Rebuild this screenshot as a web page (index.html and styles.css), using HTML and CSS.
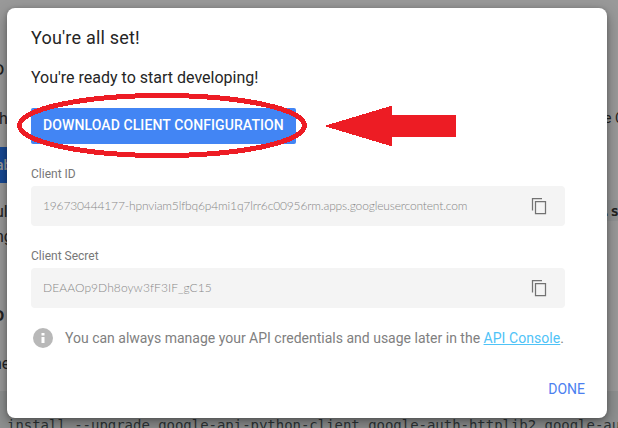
FILE: index.html
```html
<!DOCTYPE html>
<html lang="en">
<head>
<meta charset="utf-8">
<title>Client configuration</title>
<link rel="stylesheet" href="styles.css">
</head>
<body>
<main class="page">
  <div class="line heading">o</div>
  <div class="line intro"><span>h</span><span class="tail">e C</span></div>
  <div class="line enable"><span class="blue">ab</span></div>
  <div class="line result"><span>ul</span><code class="chip">.s</code></div>
  <div class="line next">ng</div>
  <div class="line heading second">o</div>
  <div class="line run">ne</div>
  <pre class="code">install --upgrade google-api-python-client google-auth-httplib2 google-au</pre>
</main>
<section class="dialog" role="dialog">
  <h1>You're all set!</h1>
  <p class="ready"><span>You're ready to start developing!</span></p>
  <button class="download"><span>DOWNLOAD CLIENT CONFIGURATION</span></button>
  <div class="label id-label">Client ID</div>
  <div class="field"><span class="value">196730444177-hpnviam5lfbq6p4mi1q7lrr6c00956rm.apps.googleusercontent.com</span>
    <svg class="copy" width="16" height="17" viewBox="0 0 16 17"><path d="M1.500 12.500V.5H11M4.500 3.500h10v12h-10z"/></svg></div>
  <div class="label secret-label">Client Secret</div>
  <div class="field"><span class="value secret">DEAAOp9Dh8oyw3fF3IF_gC15</span>
    <svg class="copy" width="16" height="17" viewBox="0 0 16 17"><path d="M1.500 12.500V.5H11M4.500 3.500h10v12h-10z"/></svg></div>
  <div class="note">
    <svg width="20" height="20" viewBox="0 0 20 20"><circle cx="10" cy="10" r="10" fill="#b8b8b8"/><path d="M8.500 5h3v2.400h-3zM8.500 9h3v6h-3z" fill="#fff"/></svg>
    <p>You can always manage your API credentials and usage later in the <a>API Console</a>.</p>
  </div>
  <div class="actions"><button class="done">DONE</button></div>
</section>
<svg class="marks" width="618" height="428" viewBox="0 0 618 428" shape-rendering="crispEdges">
  <ellipse cx="162" cy="125.5" rx="142.500" ry="30" fill="none" stroke="#ed1c24" stroke-width="5"/>
  <path d="M324 126 390.500 106H392v9h63.500v22H392v9h-1.500Z" fill="#ed1c24"/>
</svg>
</body>
</html>
```
FILE: styles.css
```css
* { box-sizing: border-box; }
body { margin: 0; width: 618px; height: 428px; overflow: hidden; background: #999; font-family: Roboto, "Liberation Sans", sans-serif; }
h1, p, pre { margin: 0; font-weight: 400; }
button { border: 0; padding: 0; font: inherit; background: none; }
.page { display: flex; flex-direction: column; height: 428px; overflow: hidden; color: #222; }
.line { flex: none; display: flex; justify-content: space-between; font-size: 16px; line-height: 24px; white-space: nowrap; }
.heading { height: 106px; padding-top: 56px; margin-left: -7px; font-size: 20px; }
.intro { height: 41px; }
.intro span:first-child { margin-left: -1px; padding-top: 1px; }
.tail { width: 18px; font-size: 14px; margin-right: -1px; padding-left: 3px; }
.enable { height: 53px; }
.blue { width: 14px; height: 36px; margin-left: -4px; background: #174994; color: #999; font-weight: 500; font-size: 14px; line-height: 36px; }
.result { height: 25px; }
.result span { margin-left: -5px; }
.chip { width: 14px; height: 21px; padding-left: 1px; background: #909293; color: #222; font: bold 14px/23px "DejaVu Sans Mono", monospace; text-indent: -3px; }
.next { height: 77px; margin-left: -5px; }
.second { height: 50px; padding-top: 0; font-weight: 500; }
.run { height: 39px; margin-left: -7px; }
.code { flex: 1; padding: 24px 0 0 7px; background: #8e9090; color: #2d3436; font: 14px/20px "DejaVu Sans Mono", monospace; letter-spacing: -.03px; }
.dialog { position: absolute; left: 7px; top: 8px; width: 600px; height: 410px; padding: 18px 24px 0; background: #fff; border-radius: 8px; box-shadow: 0 5px 14px rgba(0,0,0,.36), 0 1px 4px rgba(0,0,0,.2); }
h1 { height: 24px; font-size: 18px; line-height: 24px; color: #252525; letter-spacing: .2px; }
.ready { margin-top: 15px; height: 24px; font-size: 16px; line-height: 26px; color: #252525; }
.download { display: block; width: 265px; height: 36px; margin-top: 19px; padding-left: 12px; border-radius: 2px; background: #4285f4; color: #fff; text-align: left; font-size: 14px; font-weight: 500; line-height: 35px; letter-spacing: .1px; white-space: nowrap; }
.download span { display: block; height: 36px; }
.label { height: 16px; font-size: 12px; line-height: 16px; color: #777; }
.id-label { margin-top: 22px; }
.secret-label { margin-top: 22px; }
.field { display: flex; align-items: center; justify-content: space-between; width: 534px; height: 40px; margin-top: 4px; padding: 0 18px 0 12px; border-radius: 4px; background: #f4f4f4; }
.value { font: 300 12px/20px Lato, sans-serif; color: #888; letter-spacing: -.15px; white-space: nowrap; }
.secret { letter-spacing: .08px; }
.copy { fill: none; stroke: #727272; stroke-width: 1.25; }
.note { display: flex; gap: 12px; align-items: center; height: 24px; margin: 18px 0 0 2px; color: #808080; font-size: 14px; }
.note p { white-space: nowrap; line-height: 24px; }
.note a { color: #4fc3f7; text-decoration: underline; letter-spacing: .06px; }
.actions { display: flex; justify-content: flex-end; margin: 29px -2px 0 0; }
.done { height: 20px; color: #4c7ff0; font-size: 14px; line-height: 20px; }
.marks { position: absolute; left: 0; top: 0; }
```
